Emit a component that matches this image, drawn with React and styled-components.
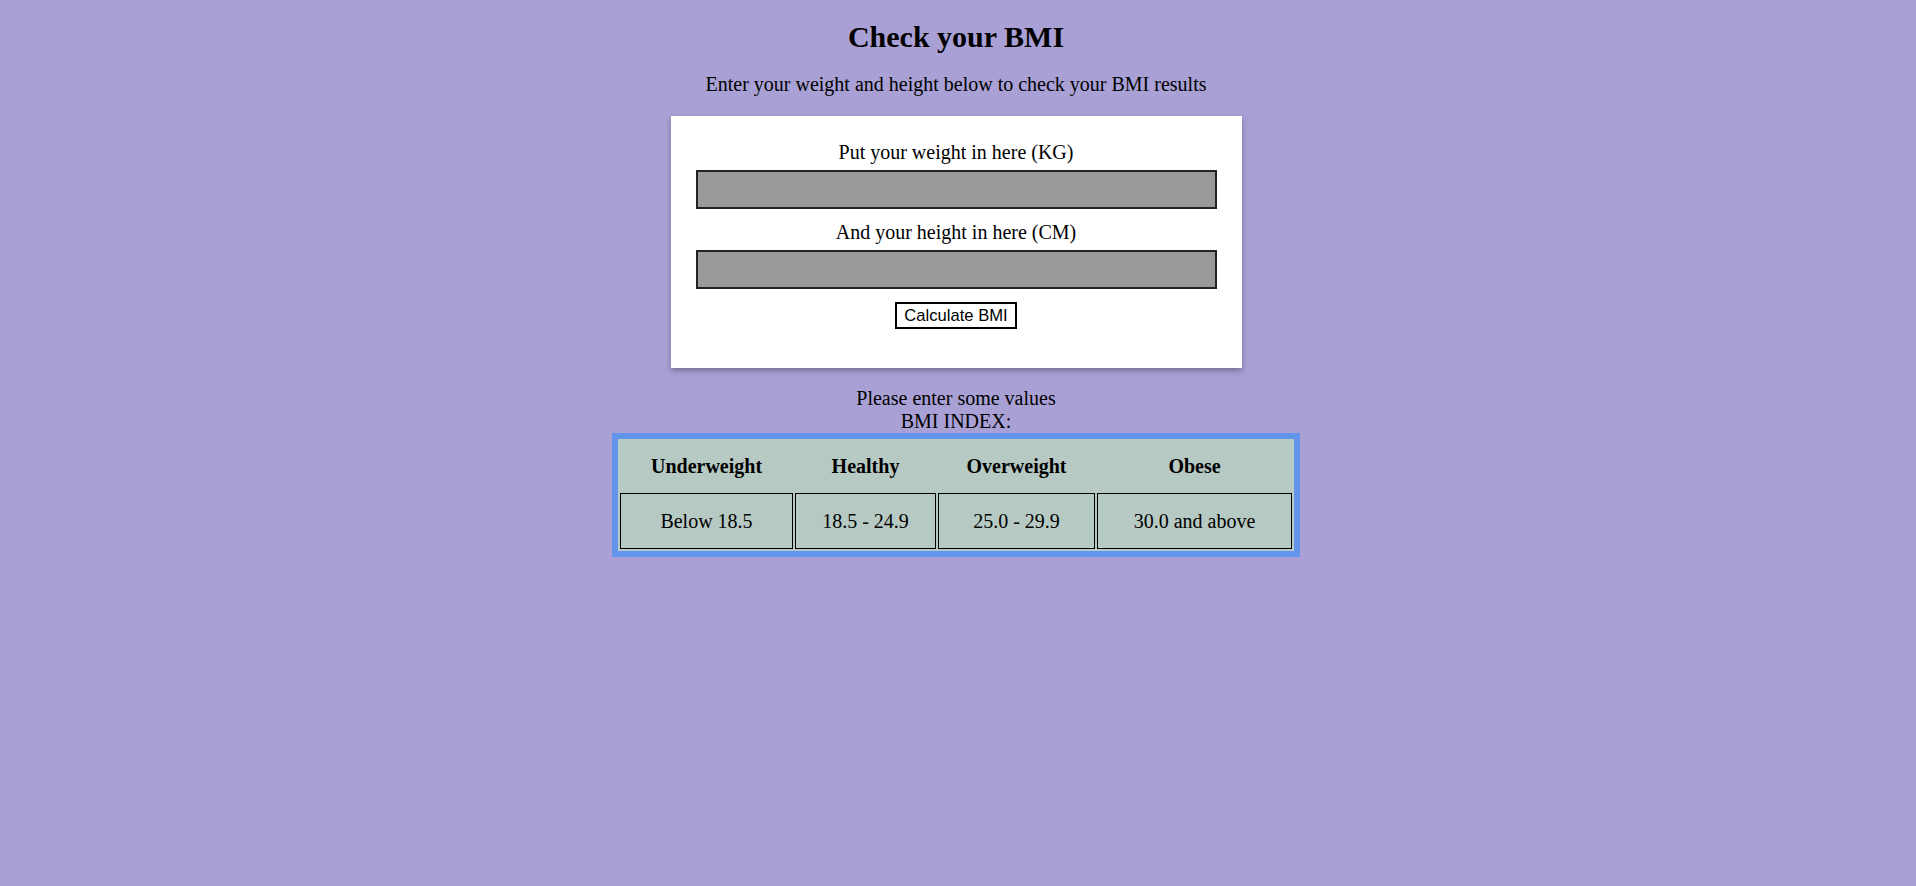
import React, { useState } from 'react';
import styled, { createGlobalStyle } from 'styled-components';

const GlobalStyle = createGlobalStyle`
  html, body {
    margin: 0;
    padding: 0;
    background: #a9a1d5;
    font-family: "Liberation Serif", "Times New Roman", serif;
    color: #000;
  }
`;

const Page = styled.div`
  display: flex;
  flex-direction: column;
  align-items: center;
  padding: 20px 12px 0 8px;
  min-height: 866px;
  text-align: center;
`;

const Title = styled.h2`
  margin: 0;
  font-size: 30px;
  font-weight: bold;
  line-height: 34px;
`;

const Intro = styled.p`
  margin: 19px 0 20px;
  font-size: 20px;
  line-height: 23px;
`;

const Card = styled.form`
  width: 571px;
  box-sizing: border-box;
  background: #fff;
  padding: 25px 25px 39px;
  box-shadow: 0 3px 6px rgba(0, 0, 0, 0.3);
  display: flex;
  flex-direction: column;
  align-items: center;
`;

const Label = styled.label`
  font-size: 20px;
  line-height: 23px;
  margin-top: ${(props) => (props.first ? '0' : '12px')};
  margin-bottom: 6px;
`;

const Input = styled.input`
  width: 100%;
  height: 39px;
  box-sizing: border-box;
  background: #999;
  border: 2.5px solid #222;
  font-size: 20px;
  outline: none;
`;

const Button = styled.button`
  margin-top: 13px;
  height: 27px;
  padding: 0 7px;
  background: #fff;
  border: 2.5px solid #000;
  font-family: "Liberation Sans", Arial, sans-serif;
  font-size: 16.6px;
  color: #000;
  cursor: pointer;
`;

const Result = styled.div`
  margin-top: 19px;
  font-size: 20px;
  line-height: 23px;
`;

const Table = styled.table`
  table-layout: fixed;
  width: 688px;
  border: 6px solid #6495ed;
  background: #b6c9c3;
  border-spacing: 2.5px;
  font-size: 20px;
`;

const Head = styled.th`
  width: ${(props) => props.w}px;
  height: 50px;
  padding: 0;
  font-weight: bold;
`;

const Cell = styled.td`
  height: 54px;
  padding: 0;
  border: 1px solid #000;
`;

const ranges = [
  { name: 'Underweight', value: 'Below 18.5', w: 173 },
  { name: 'Healthy', value: '18.5 - 24.9', w: 141 },
  { name: 'Overweight', value: '25.0 - 29.9', w: 157 },
  { name: 'Obese', value: '30.0 and above', w: 195 },
];

const App = () => {
  const [weight, setWeight] = useState('');
  const [height, setHeight] = useState('');
  const [message, setMessage] = useState('Please enter some values');

  const handleSubmit = (e) => {
    e.preventDefault();
    const w = parseFloat(weight);
    const h = parseFloat(height) / 100;
    if (!w || !h) {
      setMessage('Please enter some values');
      return;
    }
    setMessage(`Your BMI is ${(w / (h * h)).toFixed(1)}`);
  };

  return (
    <Page>
      <GlobalStyle />
      <Title>Check your BMI</Title>
      <Intro>Enter your weight and height below to check your BMI results</Intro>
      <Card onSubmit={handleSubmit}>
        <Label first htmlFor="weight">Put your weight in here (KG)</Label>
        <Input id="weight" value={weight} onChange={(e) => setWeight(e.target.value)} />
        <Label htmlFor="height">And your height in here (CM)</Label>
        <Input id="height" value={height} onChange={(e) => setHeight(e.target.value)} />
        <Button type="submit">Calculate BMI</Button>
      </Card>
      <Result>
        {message}
        <br />
        BMI INDEX:
      </Result>
      <Table>
        <thead>
          <tr>
            {ranges.map((r) => (
              <Head key={r.name} w={r.w}>{r.name}</Head>
            ))}
          </tr>
        </thead>
        <tbody>
          <tr>
            {ranges.map((r) => (
              <Cell key={r.name}>{r.value}</Cell>
            ))}
          </tr>
        </tbody>
      </Table>
    </Page>
  );
};

export default App;
